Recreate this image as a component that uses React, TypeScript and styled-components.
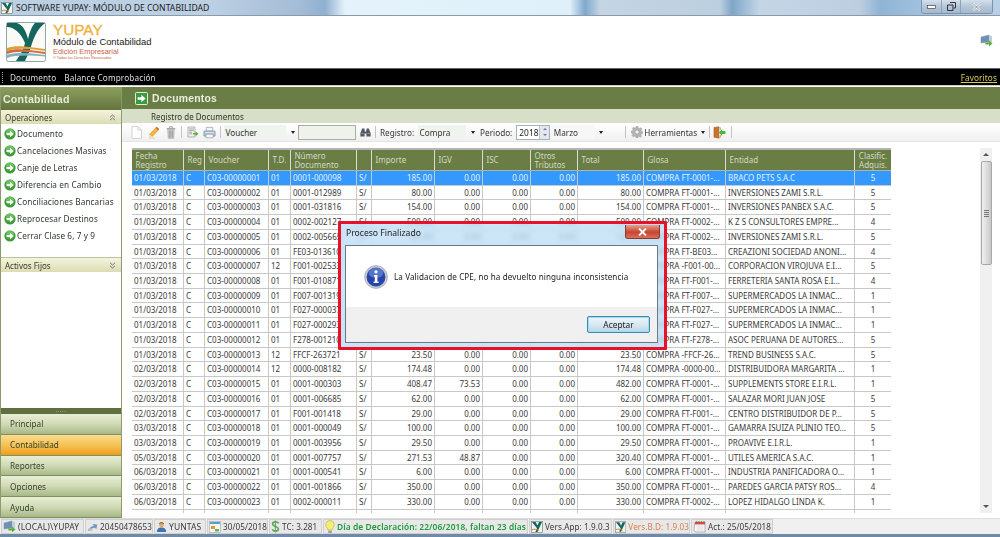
import styled, { createGlobalStyle } from "styled-components";

const GlobalStyle = createGlobalStyle`
  html, body { margin: 0; padding: 0; background: #fff; }
  body { font-family: "Noto Sans", "Liberation Sans", sans-serif; font-size: 8px; color: #333; }
  * { box-sizing: border-box; }
`;

const COLS = "52px 21px 64px 22px 66px 15px 63px 48px 48px 47px 66px 82px 129px 36px";
const ROW_H = 14.73;

const Window = styled.div`
  width: 1000px;
  height: 537px;
  overflow: hidden;
  display: flex;
  flex-direction: column;
  position: relative;
  filter: blur(0.3px);
`;

const TitleBar = styled.div`
  height: 16px;
  flex: none;
  display: flex;
  align-items: center;
  padding-left: 1px;
  gap: 3px;
  font-size: 8.67px;
  color: #222;
  border-bottom: 1px solid #8d99a8;
  background: linear-gradient(90deg, #bcd0e4 0, #bcd0e4 210px, #a4bcd6 300px, #8fb0d0 325px, #e4f3fb 345px, #dff0fa 570px, #7fa8cc 585px, #c4d5e4 600px, #bccfe0 720px, #7fa6c8 732px, #c4d6e6 760px, #bccee0 860px, #8fb4d4 880px, #a8c8e4 940px, #b9d1e6 1000px);
`;

const TitleText = styled.span`
  white-space: nowrap;
`;

const WinButtons = styled.div`
  margin-left: auto;
  margin-right: 7px;
  height: 14px;
  align-self: flex-start;
  display: flex;
  border: 1px solid #7f93a8;
  border-top: none;
  border-radius: 0 0 3px 3px;
  overflow: hidden;
`;

const WinButton = styled.div<{ $w: number }>`
  width: ${(p) => p.$w}px;
  display: flex;
  align-items: center;
  justify-content: center;
  background: linear-gradient(#d4e0ec, #b4c6d8 50%, #a6bacd);
  border-right: 1px solid #8fa3b8;
  &:last-child { border-right: none; }
`;

const Header = styled.div`
  height: 52px;
  flex: none;
  display: flex;
  align-items: flex-start;
  padding: 6px 0 0 6px;
  background: #fff;
`;

const LogoText = styled.div`
  margin-left: 7px;
  display: flex;
  flex-direction: column;
`;

const Brand = styled.div`
  font-family: "Liberation Sans", sans-serif;
  font-size: 15.3px;
  line-height: 15px;
  -webkit-text-stroke: 0.35px #eeb23c;
  color: #eeb23c;
`;

const Product = styled.div`
  font-family: "Liberation Sans", sans-serif;
  font-size: 9.4px;
  line-height: 10px;
  color: #222;
`;

const Edition = styled.div`
  font-family: "Liberation Sans", sans-serif;
  font-size: 7.4px;
  line-height: 9px;
  color: #c9654a;
`;

const Rights = styled.div`
  font-family: "Liberation Sans", sans-serif;
  font-size: 3.8px;
  line-height: 5px;
  color: #c9654a;
`;

const HeaderIcon = styled.div`
  margin: 12px 7px 0 auto;
  width: 13px;
`;

const MenuBar = styled.div`
  height: 17px;
  flex: none;
  display: flex;
  align-items: center;
  background: #000;
  border-top: 1px solid #666;
  color: #ddd;
  font-size: 8.2px;
  letter-spacing: 0.12px;
  padding: 0 2px;
`;

const Grip = styled.span`
  width: 1px;
  height: 11px;
  margin-right: 7px;
  border-left: 1px dotted #aaa;
`;

const MenuItem = styled.span`
  margin-right: 8px;
`;

const Favorites = styled.a`
  margin-left: auto;
  margin-right: 1px;
  color: #d8c860;
  text-decoration: underline;
`;

const Body = styled.div`
  flex: 1;
  min-height: 0;
  display: flex;
  border-top: 1px solid #ccc;
  padding-top: 1px;
`;

const Sidebar = styled.div`
  width: 122px;
  flex: none;
  display: flex;
  flex-direction: column;
  border-right: 1px solid #8c9a70;
  border-left: 1px solid #8c9a70;
`;

const SideTitle = styled.div`
  height: 23px;
  flex: none;
  display: flex;
  align-items: center;
  padding-left: 2px;
  font-family: "Liberation Sans", sans-serif;
  font-size: 10.6px;
  font-weight: 700;
  letter-spacing: 0.2px;
  color: #e6ecd8;
  background: linear-gradient(#8ea05e, #62743e);
`;

const SectionHead = styled.div`
  height: 14px;
  flex: none;
  display: flex;
  align-items: center;
  justify-content: space-between;
  padding: 0 5px 0 4px;
  color: #3a3a2a;
  font-size: 8px;
  background: linear-gradient(#f6f3dc, #dcdcb4);
`;

const SectionBody = styled.div<{ $h?: number }>`
  height: ${(p) => (p.$h ? `${p.$h}px` : "auto")};
  flex: ${(p) => (p.$h ? "none" : "1")};
  padding: 1px 0 0 3px;
  background: #fff;
  border-bottom: ${(p) => (p.$h ? "1px solid #b8c4a0" : "none")};
`;

const Task = styled.div`
  height: 17px;
  display: flex;
  align-items: center;
  gap: 1px;
  font-size: 8.2px;
  letter-spacing: 0.1px;
  color: #2c3a2c;
  white-space: nowrap;
`;

const Splitter = styled.div`
  height: 6px;
  flex: none;
  display: flex;
  align-items: center;
  justify-content: center;
  background: #5f7040;
  color: #dde;
  font-size: 6px;
  line-height: 6px;
  letter-spacing: 0.5px;
`;

const NavButton = styled.div<{ $active?: boolean }>`
  height: 20.8px;
  flex: none;
  display: flex;
  align-items: center;
  padding-left: 9px;
  font-size: 8.2px;
  color: #33402a;
  border-bottom: 1px solid #7f9060;
  background: ${(p) =>
    p.$active
      ? "linear-gradient(#fbdc8c, #f5c050 55%, #ee9c1c)"
      : "linear-gradient(#e8eed6, #d0dab4 50%, #a8b888)"};
`;

const Main = styled.div`
  flex: 1;
  min-width: 0;
  display: flex;
  flex-direction: column;
`;

const MainHead = styled.div`
  height: 22px;
  flex: none;
  display: flex;
  align-items: center;
  padding: 1px 0 0 13px;
  gap: 4px;
  font-family: "Liberation Sans", sans-serif;
  font-size: 10.4px;
  font-weight: 700;
  letter-spacing: 0.2px;
  color: #e8eedc;
  background: #6a7d45;
`;

const Tab = styled.div`
  height: 14px;
  flex: none;
  display: flex;
  align-items: center;
  padding-left: 29px;
  font-size: 8px;
  color: #2e3324;
  background: #d8dfc8;
`;

const Toolbar = styled.div`
  height: 19px;
  flex: none;
  display: flex;
  align-items: center;
  padding-left: 8px;
  font-size: 8.2px;
  color: #333;
  background: linear-gradient(#fff, #f0f0f0);
  border-bottom: 1px solid #e4e4e4;
`;

const Tool = styled.span<{ $ml?: number }>`
  width: 13px;
  height: 14px;
  margin-left: ${(p) => p.$ml ?? 4}px;
  flex: none;
  display: flex;
  align-items: center;
  justify-content: center;
`;

const Sep = styled.span<{ $ml?: number }>`
  width: 1px;
  height: 12px;
  flex: none;
  margin: 0 3px 0 ${(p) => p.$ml ?? 4}px;
  background: #c4c4c4;
`;

const Combo = styled.div<{ $w: number; $bg?: string }>`
  width: ${(p) => p.$w}px;
  height: 14px;
  flex: none;
  display: flex;
  align-items: center;
  padding-left: 1.5px;
  background: ${(p) => p.$bg ?? "#f0f4ee"};
`;

const Caret = styled.span<{ $ml?: number }>`
  margin-left: ${(p) => p.$ml ?? 5}px;
  margin-right: 3px;
  width: 0;
  height: 0;
  flex: none;
  border-left: 2px solid transparent;
  border-right: 2px solid transparent;
  border-top: 3px solid #222;
`;

const SearchBox = styled.div`
  width: 58px;
  height: 15px;
  flex: none;
  background: #eef2ea;
  border: 1px solid #a8b0a4;
`;

const Label = styled.span<{ $ml?: number }>`
  margin-left: ${(p) => p.$ml ?? 0}px;
  margin-right: 4px;
  flex: none;
  white-space: nowrap;
`;

const Spinner = styled.div`
  width: 34px;
  height: 15px;
  flex: none;
  display: flex;
  align-items: center;
  justify-content: space-between;
  padding-left: 2px;
  margin-right: 2px;
  background: #fff;
  border: 1px solid #a8b0bc;
  font-size: 8.4px;
  color: #222;
`;

const SpinArrows = styled.div`
  width: 10px;
  height: 100%;
  display: flex;
  flex-direction: column;
  align-items: center;
  justify-content: space-around;
  background: #e4e8ee;
  border-left: 1px solid #c0c6d0;
`;

const SpinUp = styled.span`
  border-left: 2px solid transparent;
  border-right: 2px solid transparent;
  border-bottom: 2px solid #6a7a90;
`;

const SpinDown = styled(SpinUp)`
  border-bottom: none;
  border-top: 2px solid #6a7a90;
`;

const Content = styled.div`
  flex: 1;
  min-height: 0;
  display: flex;
  align-items: flex-start;
  padding: 6px 0 0 10px;
  background: #fff;
`;

const Grid = styled.div`
  width: 759px;
  height: 365px;
  flex: none;
  overflow: hidden;
`;

const HeadRow = styled.div`
  display: grid;
  grid-template-columns: ${COLS};
  height: 23px;
  background: #6a7d45;
  border-top: 2px solid #b4b4b4;
  border-bottom: 1px solid #b0b4a8;
`;

const HeadCell = styled.div<{ $center?: boolean }>`
  display: flex;
  align-items: center;
  justify-content: ${(p) => (p.$center ? "center" : "flex-start")};
  text-align: ${(p) => (p.$center ? "center" : "left")};
  padding-left: ${(p) => (p.$center ? 0 : 3.5)}px;
  line-height: 9.5px;
  font-size: 8px;
  color: #d2dac2;
  border-right: 1px solid #d8decb;
  white-space: pre-line;
  overflow: hidden;
  &:last-child { border-right: none; }
`;

const DataRow = styled.div<{ $selected?: boolean }>`
  display: grid;
  grid-template-columns: ${COLS};
  height: ${ROW_H}px;
  background: ${(p) => (p.$selected ? "#3399ff" : "#fff")};
  color: ${(p) => (p.$selected ? "#e4f0ff" : "#3a3a3a")};
  border-bottom: 1px solid #c8c8c8;
`;

const Cell = styled.div<{ $align?: string }>`
  padding: 0 2px;
  line-height: 13.5px;
  font-size: 8px;
  text-align: ${(p) => p.$align ?? "left"};
  white-space: nowrap;
  overflow: hidden;
  border-right: 1px solid #c8c8c8;
  &:last-child { border-right: none; }
`;

const Scrollbar = styled.div`
  width: 12px;
  height: 365px;
  margin-left: 89px;
  flex: none;
  display: flex;
  flex-direction: column;
  align-items: center;
  background: #f0f0f0;
`;

const ScrollUp = styled.span`
  margin: 5px 0 5px;
  border-left: 3px solid transparent;
  border-right: 3px solid transparent;
  border-bottom: 3px solid #555;
`;

const ScrollDown = styled.span`
  margin: auto 0 5px;
  border-left: 3px solid transparent;
  border-right: 3px solid transparent;
  border-top: 3px solid #555;
`;

const ScrollThumb = styled.div`
  width: 11px;
  height: 104px;
  display: flex;
  align-items: center;
  justify-content: center;
  border: 1px solid #a8a8a8;
  border-radius: 2px;
  background: linear-gradient(90deg, #f0f0f0, #e2e2e2 40%, #c8c8c8);
`;

const ThumbGrip = styled.span`
  width: 5px;
  height: 7px;
  background: repeating-linear-gradient(#777 0 1px, transparent 1px 2px);
`;

const StatusBar = styled.div`
  height: 19px;
  flex: none;
  display: flex;
  align-items: center;
  padding: 0 0 3px 1px;
  gap: 1px;
  background: #f0f0f0;
  border-top: 1px solid #ddd;
  box-shadow: inset 0 -3px 0 #6f8aa8;
  letter-spacing: 0.1px;
  color: #3a3a3a;
`;

const StatusItem = styled.div<{ $w: number; $size?: number; $color?: string; $bold?: boolean }>`
  width: ${(p) => p.$w}px;
  height: 15px;
  flex: none;
  display: flex;
  align-items: center;
  gap: 2px;
  padding-left: 1px;
  font-size: ${(p) => p.$size ?? 8.1}px;
  white-space: nowrap;
  overflow: hidden;
  background: #e8e8e8;
  border: 1px solid #cfcfcf;
  color: ${(p) => p.$color ?? "inherit"};
  font-weight: ${(p) => (p.$bold ? 600 : 400)};
`;

const Dialog = styled.div`
  position: absolute;
  left: 338px;
  top: 221px;
  width: 329px;
  height: 129px;
  border: 3px solid #e8112a;
  border-radius: 1px;
  padding: 0 6px 4px 4px;
  display: flex;
  flex-direction: column;
  background: rgba(190, 222, 245, 0.78);
  backdrop-filter: blur(2px);
`;

const DialogTitle = styled.div`
  height: 21px;
  flex: none;
  display: flex;
  align-items: flex-start;
  padding: 3px 0 0 1px;
  line-height: 12px;
  font-size: 8.6px;
  color: #222;
`;

const CloseButton = styled.div`
  margin: -2px -2px 0 auto;
  width: 35px;
  height: 14px;
  display: flex;
  align-items: center;
  justify-content: center;
  border: 1px solid #8a3a30;
  border-top: none;
  border-radius: 0 0 3px 3px;
  background: linear-gradient(#e8a090, #c8442e 55%, #d8705a);
`;

const DialogPanel = styled.div`
  flex: 1;
  display: flex;
  flex-direction: column;
  border: 1px solid #6a7888;
  background: #fff;
`;

const Message = styled.div`
  height: 61px;
  flex: none;
  display: flex;
  align-items: center;
  padding: 0 0 0 18px;
  gap: 6px;
  font-size: 8.1px;
  letter-spacing: 0.1px;
  color: #222;
`;

const DialogFooter = styled.div`
  flex: 1;
  display: flex;
  align-items: flex-end;
  justify-content: flex-end;
  padding: 0 7px 9px 0;
  background: #f0f0f0;
`;

const AcceptButton = styled.button`
  width: 63px;
  height: 17px;
  padding: 0;
  font-family: inherit;
  font-size: 8.4px;
  color: #222;
  border: 1px solid #3a8cb4;
  border-radius: 2px;
  background: linear-gradient(#eef6fb, #d8e8f2 50%, #bcd6e6);
  box-shadow: inset 0 0 0 1px #9fdcf2;
`;

/* icons */

const ArrowCircle = () => (
  <svg width="12" height="12" viewBox="0 0 12 12">
    <circle cx="6" cy="6" r="5.6" fill="#3f9a3a" />
    <circle cx="6" cy="4.6" r="4" fill="#69c05c" />
    <path d="M2.6 5H6V2.8L9.6 6 6 9.2V7H2.6Z" fill="#fff" />
  </svg>
);

const FileIcon = () => (
  <svg width="11" height="13" viewBox="0 0 11 13">
    <path d="M1 .5H7L10.5 4V12.5H1Z" fill="#fdfdfd" stroke="#d4d4d4" />
    <path d="M7 .5V4H10.5" fill="none" stroke="#d4d4d4" />
  </svg>
);

const PencilIcon = () => (
  <svg width="12" height="13" viewBox="0 0 12 13">
    <path d="M8.6 1 11 3.2 4.2 10.6 1.6 8.4Z" fill="#f2b63c" stroke="#d58a20" strokeWidth=".6" />
    <path d="M8.6 1 11 3.2 10 4.3 7.6 2.1Z" fill="#e65a3c" />
    <path d="M1.6 8.4 4.2 10.6 1 11.6Z" fill="#f6dcb0" />
    <path d="M1 12.2H7" stroke="#e8c890" strokeWidth=".8" />
  </svg>
);

const TrashIcon = () => (
  <svg width="10" height="13" viewBox="0 0 10 13">
    <path d="M.8 2H9.2V3.4H.8Z" fill="#a8a8a8" />
    <path d="M3.6 2V.8H6.4V2" fill="none" stroke="#a0a0a0" />
    <path d="M1.6 3.4H8.4L7.8 12.4H2.2Z" fill="#c8c8c8" stroke="#a4a4a4" strokeWidth=".5" />
    <path d="M3.6 4.5V11.4M5 4.5V11.4M6.4 4.5V11.4" stroke="#8a8a8a" strokeWidth=".6" />
  </svg>
);

const ExportIcon = () => (
  <svg width="12" height="12" viewBox="0 0 12 12">
    <path d="M1 1H8V11H1Z" fill="#eef0ee" stroke="#9a9a9a" strokeWidth=".7" />
    <path d="M2.2 3H6.8M2.2 4.6H6.8M2.2 6.2H5M2.2 7.8H5" stroke="#8a8a8a" strokeWidth=".7" />
    <path d="M6 7H8.6V5.4L11.6 7.8 8.6 10.2V8.6H6Z" fill="#58b03c" />
  </svg>
);

const PrinterIcon = () => (
  <svg width="14" height="13" viewBox="0 0 14 13">
    <path d="M3.5 1H10.5V5H3.5Z" fill="#f4f6f8" stroke="#8a98a8" strokeWidth=".7" />
    <path d="M1 5H13V10.4H1Z" fill="#b8c6d6" stroke="#70849a" strokeWidth=".7" />
    <path d="M3.2 8.4H10.8V12.2H3.2Z" fill="#f4f6f8" stroke="#8a98a8" strokeWidth=".7" />
    <path d="M2 6.4H12" stroke="#e8eef4" strokeWidth=".8" />
  </svg>
);

const BinocularsIcon = () => (
  <svg width="11" height="9" viewBox="0 0 11 9">
    <path d="M2.2.6H4.4L4.8 3.4H6.2L6.6.6H8.8L10.6 5V8.4H6.4V5.6H4.6V8.4H.4V5Z" fill="#505860" />
    <path d="M1.4 5.4H3.6M7.4 5.4H9.6" stroke="#a8b0b8" strokeWidth=".8" />
  </svg>
);

const GearIcon = () => (
  <svg width="12" height="12" viewBox="0 0 12 12">
    <path
      d="M5 .4H7L7.3 2 8.6 2.6 10 1.7 11 3 10 4.2 10.4 5.2 11.8 5.6V7.4L10.3 7.8 9.8 9 10.6 10.3 9.3 11.3 8.2 10.3 7 10.7 6.8 11.9H5L4.7 10.6 3.5 10.1 2.3 10.9 1 9.6 1.9 8.5 1.4 7.3.2 7V5L1.6 4.7 2 3.6 1.2 2.3 2.6 1.2 3.6 2.1 4.7 1.6Z"
      fill="#b4b4b4"
      stroke="#909090"
      strokeWidth=".4"
    />
    <circle cx="6" cy="6" r="2" fill="#f0f0f0" stroke="#909090" strokeWidth=".5" />
  </svg>
);

const DoorIcon = () => (
  <svg width="14" height="13" viewBox="0 0 14 13">
    <path d="M1 1 6.4 .4V12.6L1 11.6Z" fill="#c8742c" stroke="#9a5220" strokeWidth=".5" />
    <path d="M6.4 1.4H8V4M6.4 11.6H8V9" fill="none" stroke="#c09060" strokeWidth=".8" />
    <path d="M13.4 5V8H9.8V10.4L6.4 6.5 9.8 2.6V5Z" fill="#46b83c" />
  </svg>
);

const GreenArrowSquare = () => (
  <svg width="13" height="13" viewBox="0 0 13 13">
    <rect x=".5" y=".5" width="12" height="12" rx="1" fill="#3a9a40" stroke="#e4ecd8" />
    <path d="M2.6 5.2H6.4V2.8L10.6 6.5 6.4 10.2V7.8H2.6Z" fill="#fff" />
  </svg>
);

const ChevronsIcon = ({ down }: { down?: boolean }) => (
  <svg width="7" height="7" viewBox="0 0 7 7">
    <path
      d={down ? "M1 .8 3.5 3 6 .8M1 3.8 3.5 6 6 3.8" : "M1 3.2 3.5 1 6 3.2M1 6.2 3.5 4 6 6.2"}
      fill="none"
      stroke="#5a6a8a"
      strokeWidth=".9"
    />
  </svg>
);

const AppIcon = ({ size = 12 }: { size?: number }) => (
  <svg width={size} height={size} viewBox="0 0 12 12">
    <rect x=".5" y=".5" width="11" height="11" fill="#f4f4ec" stroke="#5a7a78" strokeWidth=".6" />
    <path d="M1 1H4.6L6.4 4.6 8 1H11L6.4 11H4.4L6 7.2Z" fill="#15665f" />
    <path d="M1 8.8C3 7.8 5 8.2 8 9.4" stroke="#e07830" strokeWidth="1" fill="none" />
  </svg>
);

const Logo = () => (
  <svg width="40" height="40" viewBox="0 0 40 40">
    <rect x=".5" y=".5" width="39" height="39" rx="2" fill="#fbfbf6" stroke="#8fa6a4" />
    <path d="M1 1H11C17 3 20 9 22 17 24 9 26 4 29 1H39C31 7 27 17 24 28L19 39H10C14 33 18 27 19 21 15 11 8 5 1 5Z" fill="#14665e" />
    <path d="M1 26C9 23 19 24 39 27V29C20 26 9 26 1 29Z" fill="#d9a13a" />
    <path d="M1 29C9 26 19 27 39 30V32C20 29 9 29 1 32Z" fill="#d8683a" />
    <path d="M1 33C9 30 22 31 39 33V34.5C22 33 9 33 1 36Z" fill="#7fb2c4" />
  </svg>
);

const InfoIcon = () => (
  <svg width="24" height="24" viewBox="0 0 24 24">
    <circle cx="12" cy="12" r="11.4" fill="#c8ccd4" stroke="#8f96a4" strokeWidth=".6" />
    <circle cx="12" cy="12" r="9.4" fill="#2546a8" />
    <ellipse cx="12" cy="8" rx="7.4" ry="5" fill="#6a8ad8" opacity=".7" />
    <circle cx="12" cy="6.8" r="1.6" fill="#fff" />
    <path d="M10 10H13.4V16.6H14.6V18H9.6V16.6H10.8V11.4H10Z" fill="#fff" />
  </svg>
);

const ConnectIcon = () => (
  <svg width="13" height="13" viewBox="0 0 13 13">
    <path d="M1 3 9 1V8L1 9Z" fill="#6e90b4" stroke="#8a9aa8" strokeWidth=".6" />
    <path d="M9 1 12 2V8L9 8Z" fill="#c4ccd4" />
    <path d="M5.4 8.4H9V6.6L12.6 9.4 9 12.2V10.4H5.4Z" fill="#58b03c" />
  </svg>
);

const DbIcon = () => (
  <svg width="14" height="13" viewBox="0 0 14 13">
    <path d="M1 12C3 8 6 6 9 6L7 3.4 13 4 12 10 10 8C7 8 4 10 3 12.4Z" fill="#6e96c4" />
    <rect x="2" y="9" width="5" height="3" fill="#b8c4d0" />
  </svg>
);

const UserIcon = () => (
  <svg width="11" height="14" viewBox="0 0 13 14">
    <circle cx="6.5" cy="4" r="3" fill="#e8a868" />
    <path d="M3.4 3.4C4 .6 9 .6 9.6 3.4 8 2.4 5 2.4 3.4 3.4Z" fill="#8a5a2c" />
    <path d="M1 13C1 9 3.4 7.6 6.5 7.6S12 9 12 13Z" fill="#3f74b4" />
  </svg>
);

const CalendarColorIcon = () => (
  <svg width="12" height="12" viewBox="0 0 12 12">
    <rect x=".5" y=".5" width="11" height="11" fill="#f4f6f0" stroke="#9aa4a8" strokeWidth=".6" />
    <path d="M1 1H11V3H1Z" fill="#58a0c8" />
    <path d="M2 5H6V8H2Z" fill="#e89040" />
    <path d="M6 8H10V10.5H6Z" fill="#60b060" />
  </svg>
);

const CalendarIcon = () => (
  <svg width="13" height="13" viewBox="0 0 13 13">
    <path d="M2 2H12V12H3L1 10.4Z" fill="#fafafa" stroke="#8a8a8a" strokeWidth=".6" />
    <path d="M2 2H12V4.4H2Z" fill="#d84a3c" />
    <path d="M3.5 1V3M6 1V3M8.5 1V3M11 1V3" stroke="#666" strokeWidth=".6" />
    <path d="M3.5 6H10.5M3.5 8H10.5M3.5 10H10.5" stroke="#c4c4c4" strokeWidth=".6" />
  </svg>
);

const BulbIcon = () => (
  <svg width="10" height="14" viewBox="0 0 10 14">
    <path d="M5 .6C2.4.6.8 2.4.8 4.8.8 7 2.6 8 3 10H7C7.4 8 9.2 7 9.2 4.8 9.2 2.4 7.6.6 5 .6Z" fill="#f6ee70" stroke="#b8a838" strokeWidth=".6" />
    <path d="M3.2 10.6H6.8V13H3.2Z" fill="#a0a0a0" />
  </svg>
);

const DollarIcon = () => (
  <svg width="9" height="13" viewBox="0 0 9 13">
    <path d="M7.6 3.4C7 2.2 5.8 1.8 4.4 1.8 2.8 1.8 1.6 2.6 1.6 4S2.8 5.8 4.4 6.4 7.4 7.4 7.4 9 6 11.2 4.4 11.2 1.8 10.6 1.2 9.4" fill="none" stroke="#5fa85a" strokeWidth="1.7" />
    <path d="M4.4.4V12.6" stroke="#5fa85a" strokeWidth="1.1" />
  </svg>
);

const PC = "COMPRA FT-0001-...";

// fecha, voucher, td, numero, importe, igv, total, glosa, entidad, clasif
// importe vacio: la fila queda tapada por el dialogo
const ROWS: string[][] = [
  ["01/03/2018", "00000001", "01", "0001-000098", "185.00", "0.00", "185.00", PC, "BRACO PETS S.A.C", "5"],
  ["01/03/2018", "00000002", "01", "0001-012989", "80.00", "0.00", "80.00", PC, "INVERSIONES ZAMI S.R.L.", "5"],
  ["01/03/2018", "00000003", "01", "0001-031816", "154.00", "0.00", "154.00", PC, "INVERSIONES PANBEX S.A.C.", "5"],
  ["01/03/2018", "00000004", "01", "0002-002127", "500.00", "0.00", "500.00", "COMPRA FT-0002-...", "K Z S CONSULTORES EMPRE...", "4"],
  ["01/03/2018", "00000005", "01", "0002-005665", "120.00", "0.00", "120.00", "COMPRA FT-0002-...", "INVERSIONES ZAMI S.R.L.", "5"],
  ["01/03/2018", "00000006", "01", "FE03-013610", "", "", "", "COMPRA FT-BE03...", "CREAZIONI SOCIEDAD ANONI...", "4"],
  ["01/03/2018", "00000007", "12", "F001-002533", "", "", "", "COMPRA -F001-00...", "CORPORACION VIROJUVA E.I...", "5"],
  ["01/03/2018", "00000008", "01", "F001-010871", "", "", "", "COMPRA FT-F001-...", "FERRETERIA SANTA ROSA E.I...", "4"],
  ["01/03/2018", "00000009", "01", "F007-001319", "", "", "", "COMPRA FT-F007-...", "SUPERMERCADOS LA INMAC...", "1"],
  ["01/03/2018", "00000010", "01", "F027-000037", "", "", "", "COMPRA FT-F027-...", "SUPERMERCADOS LA INMAC...", "1"],
  ["01/03/2018", "00000011", "01", "F027-000293", "", "", "", "COMPRA FT-F027-...", "SUPERMERCADOS LA INMAC...", "1"],
  ["01/03/2018", "00000012", "01", "F278-001210", "", "", "", "COMPRA FT-F278-...", "ASOC PERUANA DE AUTORES...", "5"],
  ["01/03/2018", "00000013", "12", "FFCF-263721", "23.50", "0.00", "23.50", "COMPRA -FFCF-26...", "TREND BUSINESS S.A.C.", "5"],
  ["02/03/2018", "00000014", "12", "0000-008182", "174.48", "0.00", "174.48", "COMPRA -0000-00...", "DISTRIBUIDORA MARGARITA ...", "1"],
  ["02/03/2018", "00000015", "01", "0001-000303", "408.47", "73.53", "482.00", PC, "SUPPLEMENTS STORE E.I.R.L.", "1"],
  ["02/03/2018", "00000016", "01", "0001-006685", "62.00", "0.00", "62.00", PC, "SALAZAR MORI JUAN JOSE", "5"],
  ["02/03/2018", "00000017", "01", "F001-001418", "29.00", "0.00", "29.00", "COMPRA FT-F001-...", "CENTRO DISTRIBUIDOR DE P...", "5"],
  ["03/03/2018", "00000018", "01", "0001-000049", "100.00", "0.00", "100.00", PC, "GAMARRA ISUIZA PLINIO TEO...", "5"],
  ["03/03/2018", "00000019", "01", "0001-003956", "29.50", "0.00", "29.50", PC, "PROAVIVE E.I.R.L.", "1"],
  ["05/03/2018", "00000020", "01", "0001-007757", "271.53", "48.87", "320.40", PC, "UTILES AMERICA S.A.C.", "1"],
  ["06/03/2018", "00000021", "01", "0001-000541", "6.00", "0.00", "6.00", PC, "INDUSTRIA PANIFICADORA O...", "1"],
  ["06/03/2018", "00000022", "01", "0001-001866", "350.00", "0.00", "350.00", PC, "PAREDES GARCIA PATSY ROS...", "4"],
  ["06/03/2018", "00000023", "01", "0002-000011", "330.00", "0.00", "330.00", "COMPRA FT-0002-...", "LOPEZ HIDALGO LINDA K.", "1"],
];

const HEADS = [
  "Fecha\nRegistro", "Reg", "Voucher", "T.D.", "Número\nDocumento", "", "Importe", "IGV", "ISC",
  "Otros\nTributos", "Total", "Glosa", "Entidad",
];

const TASKS = [
  "Documento", "Cancelaciones Masivas", "Canje de Letras", "Diferencia en Cambio",
  "Conciliaciones Bancarias", "Reprocesar Destinos", "Cerrar Clase 6, 7 y 9",
];

export default function App() {
  return (
    <Window>
      <GlobalStyle />
      <TitleBar>
        <AppIcon />
        <TitleText>SOFTWARE YUPAY: MÓDULO DE CONTABILIDAD</TitleText>
        <WinButtons>
          <WinButton $w={20}>
            <svg width="9" height="4" viewBox="0 0 9 4"><rect x=".5" y=".5" width="8" height="3" fill="#fff" stroke="#445" strokeWidth=".7" /></svg>
          </WinButton>
          <WinButton $w={19}>
            <svg width="9" height="9" viewBox="0 0 9 9"><path d="M3 .5H8.5V6H6.5M.5 3H6V8.5H.5Z" fill="none" stroke="#334" strokeWidth="1" /></svg>
          </WinButton>
          <WinButton $w={31}>
            <svg width="9" height="8" viewBox="0 0 9 8"><path d="M1 .5 8 7.5M8 .5 1 7.5" stroke="#fff" strokeWidth="2" /><path d="M1 .5 8 7.5M8 .5 1 7.5" stroke="#445" strokeWidth=".6" /></svg>
          </WinButton>
        </WinButtons>
      </TitleBar>

      <Header>
        <Logo />
        <LogoText>
          <Brand>YUPAY</Brand>
          <Product>Módulo de Contabilidad</Product>
          <Edition>Edición Empresarial</Edition>
          <Rights>® Todos los Derechos Reservados</Rights>
        </LogoText>
        <HeaderIcon><ConnectIcon /></HeaderIcon>
      </Header>

      <MenuBar>
        <Grip />
        <MenuItem>Documento</MenuItem>
        <MenuItem>Balance Comprobación</MenuItem>
        <Favorites>Favoritos</Favorites>
      </MenuBar>

      <Body>
        <Sidebar>
          <SideTitle>Contabilidad</SideTitle>
          <SectionHead>Operaciones<ChevronsIcon /></SectionHead>
          <SectionBody $h={134}>
            {TASKS.map((t) => (
              <Task key={t}><ArrowCircle />{t}</Task>
            ))}
          </SectionBody>
          <SectionHead>Activos Fijos<ChevronsIcon down /></SectionHead>
          <SectionBody />
          <Splitter>·····</Splitter>
          <NavButton>Principal</NavButton>
          <NavButton $active>Contabilidad</NavButton>
          <NavButton>Reportes</NavButton>
          <NavButton>Opciones</NavButton>
          <NavButton>Ayuda</NavButton>
        </Sidebar>

        <Main>
          <MainHead><GreenArrowSquare />Documentos</MainHead>
          <Tab>Registro de Documentos</Tab>
          <Toolbar>
            <Tool $ml={0}><FileIcon /></Tool>
            <Tool><PencilIcon /></Tool>
            <Tool><TrashIcon /></Tool>
            <Sep />
            <Tool $ml={1}><ExportIcon /></Tool>
            <Tool><PrinterIcon /></Tool>
            <Sep />
            <Combo $w={62}>Voucher</Combo>
            <Caret />
            <SearchBox />
            <Tool $ml={3}><BinocularsIcon /></Tool>
            <Sep $ml={3} />
            <Label $ml={1}>Registro:</Label>
            <Combo $w={48}>Compra</Combo>
            <Caret />
            <Label $ml={2}>Periodo:</Label>
            <Spinner>2018<SpinArrows><SpinUp /><SpinDown /></SpinArrows></Spinner>
            <Combo $w={42} $bg="#f7f7f7">Marzo</Combo>
            <Caret />
            <Sep $ml={19} />
            <Tool $ml={1}><GearIcon /></Tool>
            <Label $ml={1}>Herramientas</Label>
            <Caret $ml={0} />
            <Sep $ml={1} />
            <Tool $ml={0}><DoorIcon /></Tool>
            <Sep $ml={5} />
          </Toolbar>

          <Content>
            <Grid>
              <HeadRow>
                {HEADS.map((h, i) => (
                  <HeadCell key={i}>{h}</HeadCell>
                ))}
                <HeadCell $center>{"Clasific.\nAdquis."}</HeadCell>
              </HeadRow>
              {ROWS.map((r, i) => {
                const covered = r[4] === "";
                return (
                  <DataRow key={r[1]} $selected={i === 0}>
                    <Cell>{r[0]}</Cell>
                    <Cell>C</Cell>
                    <Cell>C03-{r[1]}</Cell>
                    <Cell>{r[2]}</Cell>
                    <Cell>{r[3]}</Cell>
                    <Cell>{covered ? "" : "S/"}</Cell>
                    <Cell $align="right">{r[4]}</Cell>
                    <Cell $align="right">{r[5]}</Cell>
                    <Cell $align="right">{covered ? "" : "0.00"}</Cell>
                    <Cell $align="right">{covered ? "" : "0.00"}</Cell>
                    <Cell $align="right">{r[6]}</Cell>
                    <Cell>{r[7]}</Cell>
                    <Cell>{r[8]}</Cell>
                    <Cell $align="center">{r[9]}</Cell>
                  </DataRow>
                );
              })}
              <DataRow>
                {HEADS.map((_, i) => (
                  <Cell key={i} />
                ))}
                <Cell />
              </DataRow>
            </Grid>
            <Scrollbar>
              <ScrollUp />
              <ScrollThumb><ThumbGrip /></ScrollThumb>
              <ScrollDown />
            </Scrollbar>
          </Content>
        </Main>
      </Body>

      <StatusBar>
        <StatusItem $w={83} $size={8.5}><ConnectIcon />(LOCAL)\YUPAY</StatusItem>
        <StatusItem $w={68}><DbIcon />20450478653</StatusItem>
        <StatusItem $w={52} $size={8.5}><UserIcon />YUNTAS</StatusItem>
        <StatusItem $w={61}><CalendarColorIcon />30/05/2018</StatusItem>
        <StatusItem $w={53}><DollarIcon />TC: 3.281</StatusItem>
        <StatusItem $w={205} $size={8.4} $color="#1e9a3c" $bold><BulbIcon />Día de Declaración: 22/06/2018, faltan 23 días</StatusItem>
        <StatusItem $w={83}><AppIcon />Vers.App: 1.9.0.3</StatusItem>
        <StatusItem $w={77} $color="#d88050"><AppIcon />Vers.B.D: 1.9.03</StatusItem>
        <StatusItem $w={82}><CalendarIcon />Act.: 25/05/2018</StatusItem>
      </StatusBar>

      <Dialog>
        <DialogTitle>
          Proceso Finalizado
          <CloseButton>
            <svg width="9" height="8" viewBox="0 0 9 8"><path d="M1 .5 8 7.5M8 .5 1 7.5" stroke="#fff" strokeWidth="1.8" /></svg>
          </CloseButton>
        </DialogTitle>
        <DialogPanel>
          <Message>
            <InfoIcon />
            La Validacion de CPE, no ha devuelto ninguna inconsistencia
          </Message>
          <DialogFooter>
            <AcceptButton>Aceptar</AcceptButton>
          </DialogFooter>
        </DialogPanel>
      </Dialog>
    </Window>
  );
}
